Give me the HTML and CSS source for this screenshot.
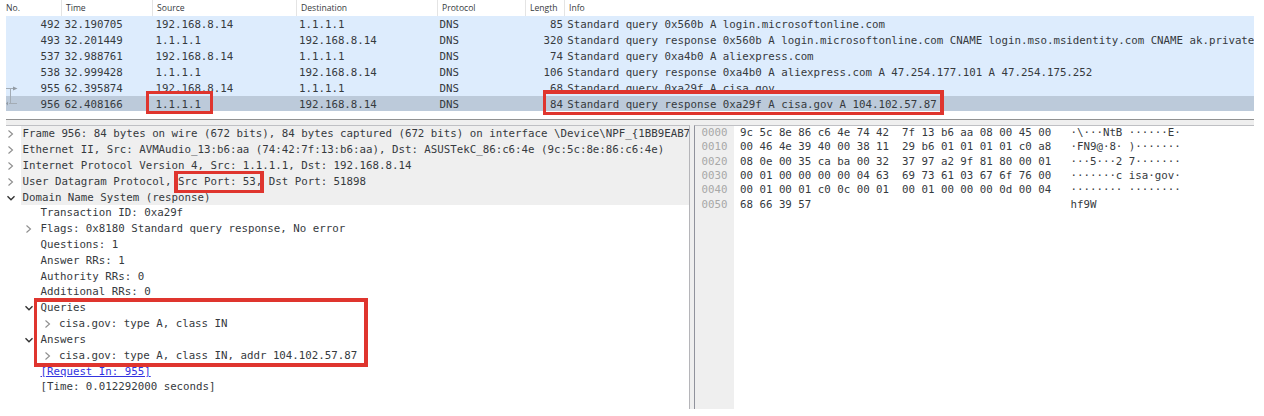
FILE: index.html
```html
<!DOCTYPE html>
<html lang="en">
<head>
<meta charset="utf-8">
<title>Packet capture</title>
<link rel="stylesheet" href="styles.css">
</head>
<body>
<main class="app">
  <section class="packets">
    <div class="row head"><span class="first">No.</span><span>Time</span><span>Source</span><span>Destination</span><span>Protocol</span><span class="len-head">Length</span><span class="info-head">Info</span></div>
    <div class="row"><span class="num">492</span><span>32.190705</span><span>192.168.8.14</span><span>1.1.1.1</span><span>DNS</span><span class="num">85</span><span>Standard query 0x560b A login.microsoftonline.com</span></div>
    <div class="row"><span class="num">493</span><span>32.201449</span><span>1.1.1.1</span><span>192.168.8.14</span><span>DNS</span><span class="num">320</span><span>Standard query response 0x560b A login.microsoftonline.com CNAME login.mso.msidentity.com CNAME ak.private</span></div>
    <div class="row"><span class="num">537</span><span>32.988761</span><span>192.168.8.14</span><span>1.1.1.1</span><span>DNS</span><span class="num">74</span><span>Standard query 0xa4b0 A aliexpress.com</span></div>
    <div class="row"><span class="num">538</span><span>32.999428</span><span>1.1.1.1</span><span>192.168.8.14</span><span>DNS</span><span class="num">106</span><span>Standard query response 0xa4b0 A aliexpress.com A 47.254.177.101 A 47.254.175.252</span></div>
    <div class="row"><span class="num">955</span><span>62.395874</span><span>192.168.8.14</span><span>1.1.1.1</span><span>DNS</span><span class="num">68</span><span>Standard query 0xa29f A cisa.gov</span></div>
    <div class="row selected"><span class="num">956</span><span>62.408166</span><span>1.1.1.1</span><span>192.168.8.14</span><span>DNS</span><span class="num">84</span><span>Standard query response 0xa29f A cisa.gov A 104.102.57.87</span></div>
    <svg class="related" viewBox="0 0 12 22" width="12" height="22"><path d="M0 4.5H8M4.5 4.5V19.5M3 19.5H11" fill="none" stroke="#a3acb5"/><path d="M7 2.5L11.5 4.5L7 6.5ZM2 17.5L0 19.5L2 21.5Z" fill="#929ba4"/></svg>
  </section>

  <section class="panes">
    <div class="tree">
      <div class="node top"><svg class="chev" viewBox="0 0 8 10"><path d="M1.5 1.5L5.5 5L1.5 8.5"/></svg><span>Frame 956: 84 bytes on wire (672 bits), 84 bytes captured (672 bits) on interface \Device\NPF_{1BB9EAB7</span></div>
      <div class="node top"><svg class="chev" viewBox="0 0 8 10"><path d="M1.5 1.5L5.5 5L1.5 8.5"/></svg><span>Ethernet II, Src: AVMAudio_13:b6:aa (74:42:7f:13:b6:aa), Dst: ASUSTekC_86:c6:4e (9c:5c:8e:86:c6:4e)</span></div>
      <div class="node top"><svg class="chev" viewBox="0 0 8 10"><path d="M1.5 1.5L5.5 5L1.5 8.5"/></svg><span>Internet Protocol Version 4, Src: 1.1.1.1, Dst: 192.168.8.14</span></div>
      <div class="node top"><svg class="chev" viewBox="0 0 8 10"><path d="M1.5 1.5L5.5 5L1.5 8.5"/></svg><span>User Datagram Protocol, Src Port: 53, Dst Port: 51898</span></div>
      <div class="node top"><svg class="chev open" viewBox="0 0 8 10"><path d="M0.5 3.2L4 6.7L7.5 3.2"/></svg><span>Domain Name System (response)</span></div>
      <div class="node sub"><i class="chev"></i><span>Transaction ID: 0xa29f</span></div>
      <div class="node sub"><svg class="chev" viewBox="0 0 8 10"><path d="M1.5 1.5L5.5 5L1.5 8.5"/></svg><span>Flags: 0x8180 Standard query response, No error</span></div>
      <div class="node sub"><i class="chev"></i><span>Questions: 1</span></div>
      <div class="node sub"><i class="chev"></i><span>Answer RRs: 1</span></div>
      <div class="node sub"><i class="chev"></i><span>Authority RRs: 0</span></div>
      <div class="node sub"><i class="chev"></i><span>Additional RRs: 0</span></div>
      <div class="node sub"><svg class="chev open" viewBox="0 0 8 10"><path d="M0.5 3.2L4 6.7L7.5 3.2"/></svg><span>Queries</span></div>
      <div class="node leaf"><svg class="chev" viewBox="0 0 8 10"><path d="M1.5 1.5L5.5 5L1.5 8.5"/></svg><span>cisa.gov: type A, class IN</span></div>
      <div class="node sub"><svg class="chev open" viewBox="0 0 8 10"><path d="M0.5 3.2L4 6.7L7.5 3.2"/></svg><span>Answers</span></div>
      <div class="node leaf"><svg class="chev" viewBox="0 0 8 10"><path d="M1.5 1.5L5.5 5L1.5 8.5"/></svg><span>cisa.gov: type A, class IN, addr 104.102.57.87</span></div>
      <div class="node sub"><i class="chev"></i><span class="link">[Request In: 955]</span></div>
      <div class="node sub"><i class="chev"></i><span>[Time: 0.012292000 seconds]</span></div>
    </div>
    <div class="bytes">
<pre class="offsets">0000
0010
0020
0030
0040
0050</pre>
<pre class="hex">9c 5c 8e 86 c6 4e 74 42  7f 13 b6 aa 08 00 45 00
00 46 4e 39 40 00 38 11  29 b6 01 01 01 01 c0 a8
08 0e 00 35 ca ba 00 32  37 97 a2 9f 81 80 00 01
00 01 00 00 00 00 04 63  69 73 61 03 67 6f 76 00
00 01 00 01 c0 0c 00 01  00 01 00 00 00 0d 00 04
68 66 39 57</pre>
<pre class="ascii">·\···NtB ······E·
·FN9@·8· )·······
···5···2 7·······
·······c isa·gov·
········ ········
hf9W</pre>
    </div>
  </section>

  <div class="mark mark-source"></div>
  <div class="mark mark-info"></div>
  <div class="mark mark-port"></div>
  <div class="mark mark-answers"></div>
</main>
</body>
</html>
```
FILE: styles.css
```css
* { box-sizing: border-box; }
body { margin: 0; background: #fff; }
.app {
  position: relative;
  width: 1264px;
  height: 416px;
  padding: 0 10px 0 6px;
  overflow: hidden;
  color: #363a3e;
  font-family: "DejaVu Sans Mono", monospace;
  font-size: 10.77px;
}
.packets { position: relative; height: 119px; }
.row {
  display: grid;
  grid-template-columns: 55px 91px 144px 139px 89px 39px 1fr;
  height: 15.85px;
  line-height: 17px;
  background: #ddecfd;
  white-space: pre;
  overflow: hidden;
}
.row span { padding-left: 3.5px; }
.row .num { padding: 0 1px 0 0; text-align: right; }
.row span:nth-child(4) { padding-left: 3px; }
.row span:nth-child(5) { padding-left: 4.5px; }
.row span:nth-child(7) { padding-left: 4.3px; }
.row .num:nth-child(6) { padding-right: 0; }
.row.head {
  grid-template-columns: 55px 91px 144px 141px 88px 39px 1fr;
  height: 16.3px;
  background: #fff;
  font-family: "Open Sans", sans-serif;
  font-size: 8.6px;
  line-height: 16px;
}
.row.head span { padding-left: 4px; border-left: 1px solid #e4e4e4; }
.row.head .first { padding-left: 0; border-left: 0; }
.row.head .info-head { padding-left: 4px; }
.selected { background: #bccada; }
.related { position: absolute; left: 0; top: 84px; }
.panes {
  display: grid;
  grid-template-columns: 684px 4px 1fr;
  height: 290px;
  padding-top: 5px;
  border-top: 1px solid #929292;
  background: #efefef;
}
.tree {
  height: 284px;
  padding-top: 0.2px;
  border-top: 1px solid #bfc0c4;
  border-right: 1px solid #b5b5b9;
  background: #fff;
  overflow: hidden;
}
.node { display: flex; height: 15.83px; line-height: 16px; white-space: pre; }
.node span { padding-left: 1.5px; }
.node.top span { flex: 1; background: #efefef; }
.sub { padding-left: 18px; }
.leaf { padding-left: 36.5px; }
.chev { flex: none; width: 8px; height: 10px; margin: 3px 6px 0 1px; fill: none; stroke: #8d8d8d; stroke-width: 1.1; }
.chev.open { stroke: #333; stroke-width: 1.4; }
.node .link { padding: 0; margin-left: 1.5px; color: #3333e0; text-decoration: underline; }
.bytes {
  grid-column: 3;
  display: grid;
  grid-template-columns: 38.5px 337px 1fr;
  height: 284px;
  border-top: 1px solid #bfc0c4;
  border-left: 1px solid #90929c;
  background: #fff;
}
pre { margin: 0; font: inherit; line-height: 14.35px; }
.offsets { padding-left: 6.5px; background: #efefef; color: #a8a8a8; }
.hex { padding-left: 6.5px; }
.mark { position: absolute; border: 4px solid #df352e; }
.mark-source { left: 146px; top: 91px; width: 67px; height: 23px; border-width: 3px; }
.mark-info { left: 543px; top: 90px; width: 401px; height: 25px; border-width: 4px 4px 3px 3px; }
.mark-port { left: 174px; top: 171px; width: 90px; height: 22px; border-width: 3px 4px; }
.mark-answers { left: 34px; top: 298px; width: 334px; height: 69px; border-width: 4px 4px 4px 3px; }
```
